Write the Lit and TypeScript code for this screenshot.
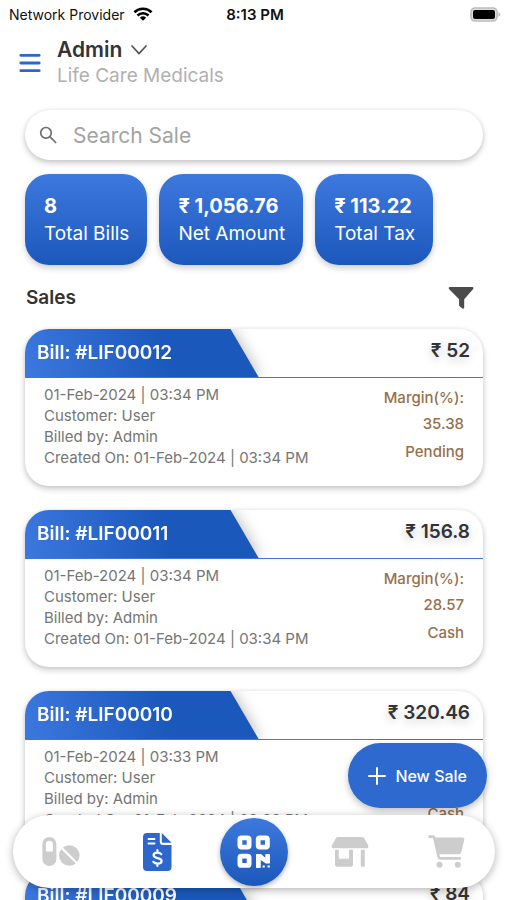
import { LitElement, html, css, svg } from "lit";
import { customElement, property } from "lit/decorators.js";

interface Bill {
  id: string;
  amount: string;
  date: string;
  customer: string;
  billedBy: string;
  margin: string;
  status: string;
}

const bills: Bill[] = [
  { id: "LIF00012", amount: "52", date: "01-Feb-2024 | 03:34 PM", customer: "User", billedBy: "Admin", margin: "35.38", status: "Pending" },
  { id: "LIF00011", amount: "156.8", date: "01-Feb-2024 | 03:34 PM", customer: "User", billedBy: "Admin", margin: "28.57", status: "Cash" },
  { id: "LIF00010", amount: "320.46", date: "01-Feb-2024 | 03:33 PM", customer: "User", billedBy: "Admin", margin: "30.12", status: "Cash" },
  { id: "LIF00009", amount: "84", date: "01-Feb-2024 | 03:33 PM", customer: "User", billedBy: "Admin", margin: "25.00", status: "Cash" },
];

const stats = [
  { value: "8", label: "Total Bills" },
  { value: "₹ 1,056.76", label: "Net Amount" },
  { value: "₹ 113.22", label: "Total Tax" },
];

const wifiIcon = svg`<svg width="20" height="14" viewBox="0 0 20 14" fill="none" stroke="#000" stroke-width="2.6">
  <path d="M1.4 5.200a12.400 12.400 0 0 1 17.200 0"/>
  <path d="M4.500 8.500a8 8 0 0 1 11 0"/>
  <path d="M10 13.800 6.900 10.700a4.500 4.500 0 0 1 6.200 0Z" fill="#000" stroke="none"/>
</svg>`;

const batteryIcon = svg`<svg width="31" height="15" viewBox="0 0 31 15">
  <rect x="1" y="1" width="26" height="13" rx="4" fill="#ddd" stroke="#bdbdbd" stroke-width="1.6"/>
  <rect x="3" y="3" width="22" height="9" rx="2" fill="#000"/>
  <path d="M28.400 5.200c1.600.6 2 1.400 2 2.300s-.4 1.700-2 2.300Z" fill="#bdbdbd"/>
</svg>`;

const menuIcon = svg`<svg width="22" height="20" viewBox="0 0 22 20" stroke="#2d67cb" stroke-width="2.800" stroke-linecap="round">
  <path d="M1.800 2.300h18.400M1.800 10h18.400M1.800 17.700h18.400"/>
</svg>`;

const chevronIcon = svg`<svg width="18" height="12" viewBox="0 0 18 12" fill="none" stroke="#555" stroke-width="1.700" stroke-linecap="round" stroke-linejoin="round">
  <path d="m2 2 7 7.600L16 2"/>
</svg>`;

const searchIcon = svg`<svg width="18" height="18" viewBox="0 0 18 18" fill="none" stroke="#6e6e6e" stroke-width="1.700" stroke-linecap="round">
  <circle cx="7" cy="6.800" r="5.300"/>
  <path d="m11 10.800 5.700 5.700"/>
</svg>`;

const filterIcon = svg`<svg width="26" height="22" viewBox="0 0 26 22" fill="#4b4b4b">
  <path d="M1.800 0h22.600c1 0 1.400 1.200.8 1.900L16.200 12.200v8.300c0 1-1 1.500-1.800.9l-2.800-2.100a1.300 1.300 0 0 1-.5-1v-6.100L1 1.900C.3 1.200.8 0 1.800 0Z"/>
</svg>`;

const plusIcon = svg`<svg width="18" height="18" viewBox="0 0 18 18" stroke="#fff" stroke-width="2" stroke-linecap="round">
  <path d="M9 1v16M1 9h16"/>
</svg>`;

const pillsIcon = svg`<svg width="38" height="29" viewBox="0 0 38 29" fill="#cdcdcd">
  <path fill-rule="evenodd" d="M7.400 0a7 7 0 0 1 7 7v15a7 7 0 0 1-14 0V7a7 7 0 0 1 7-7Zm0 3.700a3.500 3.500 0 0 0-3.500 3.500v7.300h7V7.200a3.500 3.500 0 0 0-3.500-3.500Z"/>
  <circle cx="27.300" cy="18.500" r="10.300"/>
  <path d="m18.500 9.700 17.600 17.600" stroke="#fff" stroke-width="2.300"/>
</svg>`;

const invoiceIcon = svg`<svg width="29" height="38" viewBox="0 0 29 38">
  <path fill="#2d67cb" d="M4 0h12.800v8.500A3.500 3.500 0 0 0 20.300 12H28.500v22a4 4 0 0 1-4 4H4a4 4 0 0 1-4-4V4a4 4 0 0 1 4-4ZM18.800 0l9.700 9.800H19.800a1 1 0 0 1-1-1Z"/>
  <path d="M5.500 6h6M5.500 10.500h6" stroke="#fff" stroke-width="1.900" stroke-linecap="round"/>
  <path d="M18.300 21.200c-1-1.100-2.400-1.500-4-1.500-2.200 0-3.700 1-3.700 2.600 0 3.800 8 1.700 8 5.600 0 1.700-1.600 2.700-4 2.700-1.700 0-3.300-.6-4.300-1.800M14.400 17v2.700M14.400 30.600v2.400" fill="none" stroke="#fff" stroke-width="2.200" stroke-linecap="round"/>
</svg>`;

const qrIcon = svg`<svg width="34" height="34" viewBox="0 0 34 34" fill="none" stroke="#fff" stroke-width="4.800" stroke-linejoin="round">
  <rect x="2.900" y="2.900" width="9.200" height="9.200" rx="1.500"/>
  <rect x="21.200" y="2.900" width="9.200" height="9.200" rx="1.500"/>
  <rect x="2.900" y="21.200" width="9.200" height="9.200" rx="1.500"/>
  <path d="M19.700 19h4.300l4.300 3.700V19.700c0-.4.300-.7.700-.7h3.300c.4 0 .7.300.7.700v8.100c0 .4-.3.700-.7.700h-3.500L23.800 25v7.300c0 .4-.3.700-.7.700h-3.400c-.4 0-.7-.3-.7-.7V19.700c0-.4.300-.7.700-.7Z" fill="#fff" stroke="none"/>
  <path d="M25.600 30.400h2.200v2.200h-2.200zM30.600 30.400h2.200v2.200h-2.200z" fill="#fff" stroke="none"/>
</svg>`;

const storeIcon = svg`<svg width="38" height="30" viewBox="0 0 38 30" fill="#cdcdcd">
  <path d="M6.800 0h24.400c.8 0 1.500.4 1.900 1.100l4 7.200c.8 1.400 0 2.900-1.500 2.900H2.400C.9 11.200.1 9.700.9 8.300l4-7.200C5.300.4 6 0 6.800 0Z"/>
  <path d="M4 12.800h3.800v9H18v-9h4v14.400a2.600 2.600 0 0 1-2.600 2.600H6.600A2.600 2.600 0 0 1 4 27.200Z"/>
  <path d="M29.800 12.800h4v15.600c0 .8-.6 1.400-1.400 1.400h-1.200c-.8 0-1.400-.6-1.400-1.400Z"/>
</svg>`;

const cartIcon = svg`<svg width="37" height="33" viewBox="0 0 37 33" fill="#cdcdcd">
  <path d="M1.500 1.600h3.200c.8 0 1.400.5 1.600 1.300l4.200 18.300c.3 1.400 1.200 2.200 2.700 2.200h18.600" fill="none" stroke="#cdcdcd" stroke-width="2.600" stroke-linecap="round"/>
  <path d="M6.500 2.500h28c1.300 0 2.100 1 1.800 2.300l-3 12.200a3 3 0 0 1-2.900 2.300H10.300Z"/>
  <circle cx="11.500" cy="29.800" r="3"/><circle cx="29.800" cy="29.800" r="3"/>
</svg>`;

@customElement("bill-card")
export class BillCard extends LitElement {
  @property({ attribute: false }) bill!: Bill;

  static styles = css`
    :host { display: block; }
    .card {
      border-radius: 24px;
      background: #fff;
      box-shadow: 0 3px 6px rgba(0, 0, 0, 0.2), 0 0 4px rgba(0, 0, 0, 0.08);
    }
    .head {
      display: flex;
      align-items: stretch;
      height: 48px;
      border-bottom: 1px solid #3d78d8;
      border-radius: 24px 24px 0 0;
      overflow: hidden;
    }
    .ribbon { flex: 0 0 51%; filter: drop-shadow(2px 0 7px rgba(0, 0, 0, 0.25)); }
    .title {
      margin: 0;
      padding-left: 12px;
      font-size: 19px;
      font-weight: 600;
      line-height: 48px;
      color: #fff;
      background: linear-gradient(75deg, #3c78df, #1b58bc 60%);
      clip-path: polygon(0 0, 88% 0, 100% 100%, 0 100%);
    }
    .amount {
      flex: 1;
      padding-right: 13px;
      text-align: right;
      font-size: 19px;
      font-weight: 600;
      line-height: 44px;
      color: #333;
      text-shadow: 0 4px 10px rgba(0, 0, 0, 0.2);
    }
    .body {
      display: flex;
      justify-content: space-between;
      padding: 6px 19px 18px;
      font-size: 15px;
    }
    .info { color: #757575; line-height: 21px; }
    .side {
      display: flex;
      flex-direction: column;
      padding-top: 1px;
      color: #97704c;
      line-height: 26px;
      text-align: right;
      font-weight: 450;
    }
    .info p, .side p { margin: 0; }
    .status { padding-top: 2px; }
  `;

  render() {
    const b = this.bill;
    return html`<article class="card">
      <div class="head">
        <div class="ribbon"><h3 class="title">Bill: #${b.id}</h3></div>
        <div class="amount">₹ ${b.amount}</div>
      </div>
      <div class="body">
        <div class="info">
          <p>${b.date}</p>
          <p>Customer: ${b.customer}</p>
          <p>Billed by: ${b.billedBy}</p>
          <p>Created On: ${b.date}</p>
        </div>
        <div class="side">
          <p>Margin(%):</p>
          <p>${b.margin}</p>
          <p class="status">${b.status}</p>
        </div>
      </div>
    </article>`;
  }
}

@customElement("app-root")
export class AppRoot extends LitElement {
  static styles = css`
    :host {
      display: flex;
      flex-direction: column;
      position: relative;
      height: 100vh;
      overflow: hidden;
      background: #fff;
      color: #333;
      font-family: Inter, "Noto Sans", sans-serif;
    }
    * { box-sizing: border-box; }
    svg { display: block; }
    button { border: 0; padding: 0; background: none; font: inherit; color: inherit; cursor: pointer; }
    .status-bar {
      display: grid;
      grid-template-columns: 1fr auto 1fr;
      align-items: center;
      height: 28px;
      padding: 0 6px 0 9px;
      font-size: 14px;
      color: #111;
      flex: none;
    }
    .carrier { display: flex; align-items: center; gap: 8px; }
    .clock { font-size: 15px; font-weight: 600; }
    .battery { justify-self: end; }
    .header { display: flex; align-items: center; gap: 16px; padding: 8px 19px 0; flex: none; }
    .admin { display: flex; align-items: center; gap: 8px; font-size: 21px; font-weight: 600; line-height: 27px; }
    .shop { margin: 0; font-size: 19px; line-height: 26px; color: #b0b0b0; }
    .search {
      display: flex;
      align-items: center;
      gap: 16px;
      flex: none;
      height: 50px;
      margin: 21px 24px 0 25px;
      padding: 0 16px 0 14px;
      border-radius: 25px;
      box-shadow: 0 3px 6px rgba(0, 0, 0, 0.2), 0 0 4px rgba(0, 0, 0, 0.08);
    }
    .search input {
      flex: 1;
      min-width: 0;
      border: 0;
      outline: 0;
      padding: 0;
      background: none;
      font: 21px Inter, "Noto Sans", sans-serif;
      color: #333;
    }
    .search input::placeholder { color: #a3a3a3; opacity: 1; }
    .stats { display: flex; gap: 12px; flex: none; margin: 14px 24px 0 25px; }
    .stat {
      padding: 19px 18px 18px 19px;
      border-radius: 24px;
      color: #fff;
      font-size: 19px;
      line-height: 27px;
      white-space: nowrap;
      background: linear-gradient(#3d78de, #1c58bc);
      box-shadow: 0 3px 6px rgba(0, 0, 0, 0.2);
    }
    .stat b { display: block; font-size: 20px; font-weight: 700; }
    .section { display: flex; align-items: center; justify-content: space-between; flex: none; margin: 21px 33px 19px 26px; }
    .section h2 { margin: 0; font-size: 19px; font-weight: 600; line-height: 24px; }
    .bills { display: flex; flex-direction: column; gap: 24px; flex: 1; min-height: 0; padding: 0 24px 0 25px; }
    .fab {
      position: absolute;
      right: 20px;
      bottom: 92px;
      display: flex;
      align-items: center;
      gap: 9px;
      height: 65px;
      padding: 0 20px;
      border-radius: 33px;
      background: #2d69cf;
      color: #fff;
      font-size: 16px;
      font-weight: 500;
      box-shadow: 0 3px 7px rgba(0, 0, 0, 0.25);
    }
    .tabs {
      position: absolute;
      left: 13px;
      right: 12px;
      bottom: 12px;
      display: grid;
      grid-template-columns: repeat(5, 1fr);
      place-items: center;
      height: 73px;
      border-radius: 37px;
      background: #fff;
      box-shadow: 0 2px 8px rgba(0, 0, 0, 0.3);
    }
    .scan {
      display: grid;
      place-items: center;
      width: 68px;
      height: 68px;
      border-radius: 50%;
      background: linear-gradient(#3d78de, #1c58bc);
      box-shadow: 0 2px 5px rgba(0, 0, 0, 0.3);
    }
  `;

  render() {
    return html`
      <div class="status-bar">
        <div class="carrier"><span>Network Provider</span>${wifiIcon}</div>
        <div class="clock">8:13 PM</div>
        <div class="battery">${batteryIcon}</div>
      </div>
      <header class="header">
        <button aria-label="Menu">${menuIcon}</button>
        <div>
          <button class="admin">Admin ${chevronIcon}</button>
          <p class="shop">Life Care Medicals</p>
        </div>
      </header>
      <label class="search">${searchIcon}<input type="text" placeholder="Search Sale" aria-label="Search Sale" /></label>
      <section class="stats">
        ${stats.map((s) => html`<div class="stat"><b>${s.value}</b>${s.label}</div>`)}
      </section>
      <div class="section">
        <h2>Sales</h2>
        <button aria-label="Filter sales">${filterIcon}</button>
      </div>
      <main class="bills">${bills.map((b) => html`<bill-card .bill=${b}></bill-card>`)}</main>
      <button class="fab">${plusIcon}New Sale</button>
      <nav class="tabs">
        <button aria-label="Medicines">${pillsIcon}</button>
        <button aria-label="Sales">${invoiceIcon}</button>
        <button class="scan" aria-label="Scan">${qrIcon}</button>
        <button aria-label="Store">${storeIcon}</button>
        <button aria-label="Cart">${cartIcon}</button>
      </nav>
    `;
  }
}
